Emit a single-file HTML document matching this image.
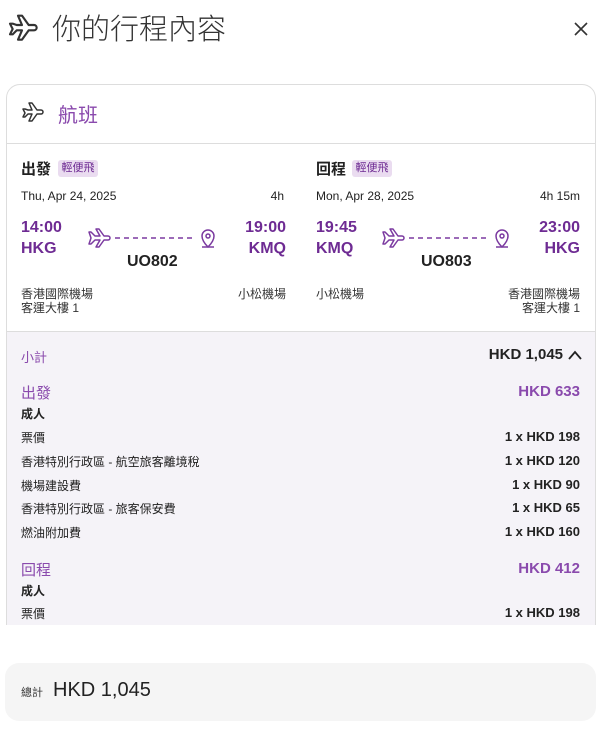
<!DOCTYPE html>
<html><head><meta charset="utf-8"><style>
*{margin:0;padding:0;box-sizing:border-box}
body{width:600px;height:730px;background:#fff;font-family:"Liberation Sans","Noto Sans CJK TC",sans-serif;color:#222;position:relative;overflow:hidden}
.a{position:absolute;white-space:nowrap}
.p{color:#6e2b93;font-weight:bold}
.lp{color:#8a4aad}
.r{text-align:right}
</style></head><body>
<svg class="a" style="left:6px;top:13px" width="32" height="32" viewBox="0 0 24 24" fill="none" stroke="#333" stroke-width="1.6" stroke-linejoin="round"><path d="M3 8l2 4-2 4h2l3-3h4l-3 7h3l5-7h4a2 2 0 0 0 0-4h-4l-5-7H9l3 7H8L5 8z"/></svg>
<div class="a" style="left:52px;top:6px;font-size:29px;color:#333;font-weight:300">你的行程內容</div>
<svg class="a" style="left:574px;top:22px" width="14" height="14" viewBox="0 0 14 14" stroke="#333" stroke-width="1.6"><path d="M1 1l12 12M13 1L1 13"/></svg>

<div class="a" style="left:6px;top:84px;width:590px;height:560px;border:1px solid #ddd;border-radius:14px;overflow:hidden">
<div class="a" style="left:0;top:246px;width:590px;height:400px;background:#f5f3f8;border-top:1px solid #ddd"></div>
<div class="a" style="left:0;top:58px;width:590px;border-top:1px solid #ddd"></div>
</div>
<div class="a" style="left:0;top:625px;width:600px;height:105px;background:#fff"></div>

<svg class="a" style="left:20px;top:101px" width="24" height="24" viewBox="0 0 24 24" fill="none" stroke="#333" stroke-width="1.5" stroke-linejoin="round"><path d="M3 8l2 4-2 4h2l3-3h4l-3 7h3l5-7h4a2 2 0 0 0 0-4h-4l-5-7H9l3 7H8L5 8z"/></svg>
<div class="a lp" style="left:58px;top:99px;font-size:20px">航班</div>

<!-- outbound -->
<div class="a" style="left:21px;top:158px;font-size:15px;font-weight:bold">出發</div>
<div class="a" style="left:58px;top:160px;width:40px;height:17px;background:#eadcf0;border-radius:3px;font-size:11px;text-align:center;line-height:17px;color:#6e2b93">輕便飛</div>
<div class="a" style="left:21px;top:189px;font-size:12px">Thu, Apr 24, 2025</div>
<div class="a r" style="left:240px;width:44px;top:189px;font-size:12px">4h</div>
<div class="a p" style="left:21px;top:219px;font-size:16px">14:00</div>
<div class="a p" style="left:21px;top:240px;font-size:16px">HKG</div>
<div class="a p r" style="left:220px;width:66px;top:219px;font-size:16px">19:00</div>
<div class="a p r" style="left:220px;width:66px;top:240px;font-size:16px">KMQ</div>
<div class="a" style="left:127px;top:253px;font-size:16px;font-weight:bold">UO802</div>
<div class="a" style="left:21px;top:285px;font-size:12px;color:#333">香港國際機場</div>
<div class="a" style="left:21px;top:299px;font-size:12px;color:#333">客運大樓 1</div>
<div class="a r" style="left:200px;width:86px;top:285px;font-size:12px;color:#333">小松機場</div>

<!-- return -->
<div class="a" style="left:316px;top:158px;font-size:15px;font-weight:bold">回程</div>
<div class="a" style="left:352px;top:160px;width:40px;height:17px;background:#eadcf0;border-radius:3px;font-size:11px;text-align:center;line-height:17px;color:#6e2b93">輕便飛</div>
<div class="a" style="left:316px;top:189px;font-size:12px">Mon, Apr 28, 2025</div>
<div class="a r" style="left:500px;width:80px;top:189px;font-size:12px">4h 15m</div>
<div class="a p" style="left:316px;top:219px;font-size:16px">19:45</div>
<div class="a p" style="left:316px;top:240px;font-size:16px">KMQ</div>
<div class="a p r" style="left:514px;width:66px;top:219px;font-size:16px">23:00</div>
<div class="a p r" style="left:514px;width:66px;top:240px;font-size:16px">HKG</div>
<div class="a" style="left:421px;top:253px;font-size:16px;font-weight:bold">UO803</div>
<div class="a" style="left:316px;top:285px;font-size:12px;color:#333">小松機場</div>
<div class="a r" style="left:480px;width:100px;top:285px;font-size:12px;color:#333">香港國際機場</div>
<div class="a r" style="left:480px;width:100px;top:299px;font-size:12px;color:#333">客運大樓 1</div>

<!-- route graphics -->
<svg class="a" style="left:86px;top:226px" width="134" height="26" viewBox="0 0 134 26" fill="none" stroke="#7b3aa0" stroke-width="1.5" stroke-linejoin="round"><path d="M3 6l2 6-2 6h2l4-4h5l-4 7h3l5-7h4a2 2 0 0 0 0-4h-4l-5-7h-3l4 7H9L5 6z"/><path d="M29 12H110" stroke-dasharray="5 4"/><path d="M122 21c-5-5-6-8-6-11a6 6 0 0 1 12 0c0 3-1 6-6 11z"/><circle cx="122" cy="10" r="2"/><path d="M116 21h12"/></svg>
<svg class="a" style="left:380px;top:226px" width="134" height="26" viewBox="0 0 134 26" fill="none" stroke="#7b3aa0" stroke-width="1.5" stroke-linejoin="round"><path d="M3 6l2 6-2 6h2l4-4h5l-4 7h3l5-7h4a2 2 0 0 0 0-4h-4l-5-7h-3l4 7H9L5 6z"/><path d="M29 12H110" stroke-dasharray="5 4"/><path d="M122 21c-5-5-6-8-6-11a6 6 0 0 1 12 0c0 3-1 6-6 11z"/><circle cx="122" cy="10" r="2"/><path d="M116 21h12"/></svg>

<!-- prices -->
<div class="a lp" style="left:21px;top:347px;font-size:13px">小計</div>
<div class="a r" style="left:400px;width:163px;top:346px;font-size:15px;font-weight:bold;color:#222">HKD 1,045</div>
<svg class="a" style="left:568px;top:349px" width="14" height="12" viewBox="0 0 14 12" fill="none" stroke="#222" stroke-width="1.8"><path d="M1 10l6-7 6 7"/></svg>

<div class="a lp" style="left:21px;top:382px;font-size:15px">出發</div>
<div class="a r" style="left:400px;width:180px;top:383px;font-size:15px;font-weight:bold;color:#8a4aad">HKD 633</div>
<div class="a" style="left:21px;top:405px;font-size:12px;font-weight:bold">成人</div>
<div class="a" style="left:21px;top:429px;font-size:12px">票價</div>
<div class="a r" style="left:400px;width:180px;top:429px;font-size:13px;font-weight:bold">1 x HKD 198</div>
<div class="a" style="left:21px;top:453px;font-size:12px">香港特別行政區 - 航空旅客離境稅</div>
<div class="a r" style="left:400px;width:180px;top:453px;font-size:13px;font-weight:bold">1 x HKD 120</div>
<div class="a" style="left:21px;top:477px;font-size:12px">機場建設費</div>
<div class="a r" style="left:400px;width:180px;top:477px;font-size:13px;font-weight:bold">1 x HKD 90</div>
<div class="a" style="left:21px;top:500px;font-size:12px">香港特別行政區 - 旅客保安費</div>
<div class="a r" style="left:400px;width:180px;top:500px;font-size:13px;font-weight:bold">1 x HKD 65</div>
<div class="a" style="left:21px;top:524px;font-size:12px">燃油附加費</div>
<div class="a r" style="left:400px;width:180px;top:524px;font-size:13px;font-weight:bold">1 x HKD 160</div>

<div class="a lp" style="left:21px;top:559px;font-size:15px">回程</div>
<div class="a r" style="left:400px;width:180px;top:560px;font-size:15px;font-weight:bold;color:#8a4aad">HKD 412</div>
<div class="a" style="left:21px;top:582px;font-size:12px;font-weight:bold">成人</div>
<div class="a" style="left:21px;top:605px;font-size:12px">票價</div>
<div class="a r" style="left:400px;width:180px;top:605px;font-size:13px;font-weight:bold">1 x HKD 198</div>

<div class="a" style="left:5px;top:663px;width:591px;height:58px;background:#f5f5f5;border-radius:14px"></div>
<div class="a" style="left:21px;top:684px;font-size:11px;color:#333">總計</div>
<div class="a" style="left:53px;top:679px;font-size:20px;color:#222">HKD 1,045</div>
</body></html>
